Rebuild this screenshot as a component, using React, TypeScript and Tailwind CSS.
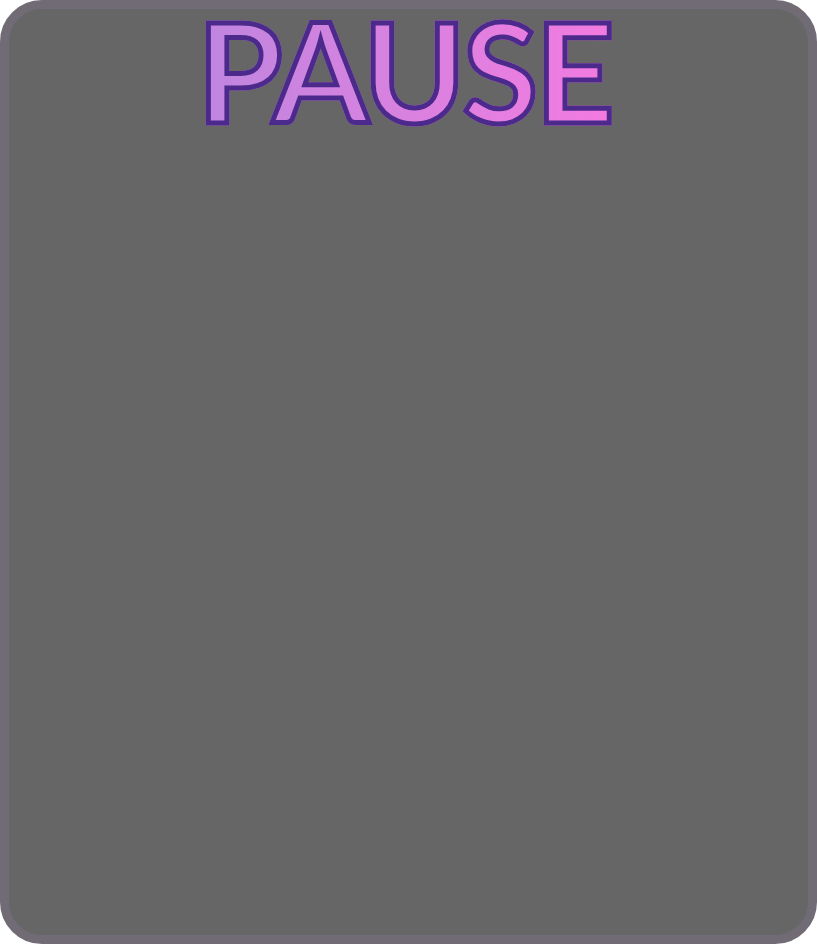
export default function App() {
  return (
    <div className="h-[944px] w-[817px] bg-white">
      <div className="flex h-full w-full flex-col items-center rounded-[42px] border-[9px] border-[#716b76] bg-[#666666]">
        <h1
          className="mt-[-15px] bg-gradient-to-r from-[#bd86df] to-[#f57ae0] bg-clip-text pl-2 pr-4 text-[138px] font-bold leading-[1.1] tracking-[-3px] text-transparent [-webkit-text-stroke:5px_#4b2a8c] [paint-order:stroke_fill]"
          style={{ fontFamily: "Lato, 'Open Sans', sans-serif" }}
        >
          PAUSE
        </h1>
      </div>
    </div>
  );
}
